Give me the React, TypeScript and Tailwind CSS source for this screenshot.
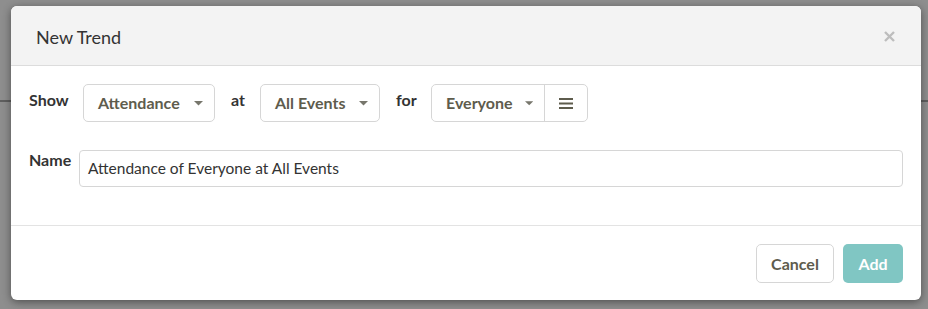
import React from "react";

function Caret() {
  return (
    <svg width="9" height="5" viewBox="0 0 9 5" className="ml-[12px]">
      <path d="M0 0 L9 0 L4.5 4.5 Z" fill="#77766c" />
    </svg>
  );
}

function Select({ label, w }: { label: string; w: string }) {
  return (
    <div
      className={`flex h-[38px] items-center justify-between rounded-[5px] border border-[#d6d6d6] bg-white pl-[14px] pr-[11px] ${w}`}
    >
      <span className="text-[16px] font-bold text-[#5e5c4d]">{label}</span>
      <Caret />
    </div>
  );
}

export default function App() {
  return (
    <div
      className="relative h-[309px] w-[928px] overflow-hidden bg-[#8e8e8e]"
      style={{ fontFamily: "Lato, 'Open Sans', sans-serif" }}
    >
      <div className="absolute left-0 top-[100px] h-[2px] w-full bg-[#5f5f5f]" />
      <div className="relative pl-[11px] pt-[6px]">
        <div className="w-[910px] overflow-hidden rounded-[6px] bg-white shadow-[0_2px_8px_rgba(0,0,0,0.45)]">
          <div className="flex h-[60px] items-center justify-between border-b border-[#dcdcdc] bg-[#f3f3f3] pl-[25px] pr-[26px]">
            <span className="mt-[4px] text-[18px] text-[#333333]">New Trend</span>
            <svg width="11" height="11" viewBox="0 0 11 11" className="mt-[2px]">
              <path d="M1 1 L10 10 M10 1 L1 10" stroke="#bdbdbd" strokeWidth="2.4" />
            </svg>
          </div>
          <div className="px-[18px] pb-[38px] pt-[18px]">
            <div className="flex items-start">
              <span className="mt-[4px] w-[54px] text-[16px] font-bold leading-[24px] text-[#333333]">Show</span>
              <Select label="Attendance" w="w-[132px]" />
              <span className="ml-[16px] mt-[4px] w-[29px] text-[16px] font-bold leading-[24px] text-[#333333]">at</span>
              <Select label="All Events" w="w-[120px]" />
              <span className="ml-[16px] mt-[4px] w-[35px] text-[16px] font-bold leading-[24px] text-[#333333]">for</span>
              <div className="flex h-[38px] rounded-[5px] border border-[#d6d6d6] bg-white">
                <div className="flex w-[113px] items-center justify-between border-r border-[#d6d6d6] pl-[14px] pr-[11px]">
                  <span className="text-[16px] font-bold text-[#5e5c4d]">Everyone</span>
                  <Caret />
                </div>
                <div className="flex w-[42px] items-center justify-center">
                  <svg width="14" height="11" viewBox="0 0 14 11">
                    <rect x="0" y="0" width="14" height="2" fill="#5e5c4d" />
                    <rect x="0" y="4.5" width="14" height="2" fill="#5e5c4d" />
                    <rect x="0" y="9" width="14" height="2" fill="#5e5c4d" />
                  </svg>
                </div>
              </div>
            </div>
            <div className="mt-[28px] flex items-start">
              <span className="w-[50px] text-[16px] font-bold leading-[20px] text-[#333333]">Name</span>
              <div className="flex h-[37px] flex-1 items-center rounded-[4px] border border-[#d6d6d6] px-[8px]">
                <span className="text-[15.5px] text-[#333333]">Attendance of Everyone at All Events</span>
              </div>
            </div>
          </div>
          <div className="flex justify-end gap-[9px] border-t border-[#e3e3e3] pb-[17px] pr-[18px] pt-[18px]">
            <button className="h-[39px] w-[78px] rounded-[5px] border border-[#d6d6d6] bg-white text-[16px] font-bold text-[#5e5c4d]">
              Cancel
            </button>
            <button className="h-[39px] w-[60px] rounded-[5px] bg-[#80c6c3] text-[16px] font-bold text-white">
              Add
            </button>
          </div>
        </div>
      </div>
    </div>
  );
}
